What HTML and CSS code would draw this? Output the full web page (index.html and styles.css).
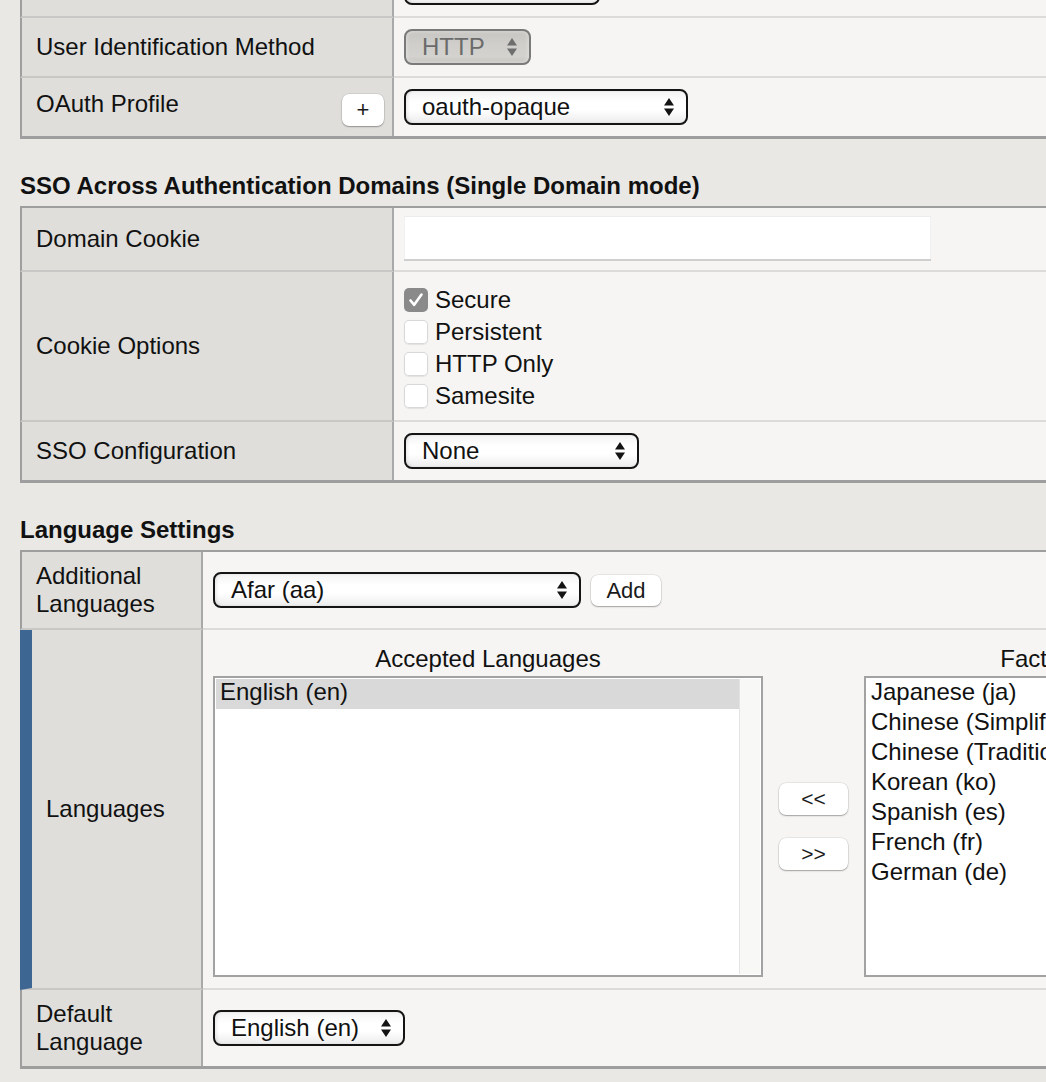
FILE: index.html
```html
<!DOCTYPE html>
<html>
<head>
<meta charset="utf-8">
<title>Access Profile Settings</title>
<link rel="stylesheet" href="styles.css">
</head>
<body>
<div class="page">

  <div class="table table-scrolled">
    <div class="row">
      <div class="label"></div>
      <div class="value">
        <div class="select w196"><span class="select-text"></span>
          <svg class="arrows" viewBox="0 0 12 20" width="12" height="20"><path d="M6 1 L11 8.5 L1 8.5 Z M1 11.5 L11 11.5 L6 19 Z"/></svg>
        </div>
      </div>
    </div>
    <div class="row">
      <div class="label">User Identification Method</div>
      <div class="value">
        <div class="select select-disabled w127"><span class="select-text">HTTP</span>
          <svg class="arrows" viewBox="0 0 12 20" width="12" height="20"><path d="M6 1 L11 8.5 L1 8.5 Z M1 11.5 L11 11.5 L6 19 Z"/></svg>
        </div>
      </div>
    </div>
    <div class="row">
      <div class="label"><span class="label-raised">OAuth Profile</span><button class="btn btn-plus" type="button">+</button></div>
      <div class="value">
        <div class="select w284"><span class="select-text">oauth-opaque</span>
          <svg class="arrows" viewBox="0 0 12 20" width="12" height="20"><path d="M6 1 L11 8.5 L1 8.5 Z M1 11.5 L11 11.5 L6 19 Z"/></svg>
        </div>
      </div>
    </div>
  </div>

  <h2 class="section-title">SSO Across Authentication Domains (Single Domain mode)</h2>
  <div class="table">
    <div class="row">
      <div class="label">Domain Cookie</div>
      <div class="value value-input"><input class="text-input" type="text"></div>
    </div>
    <div class="row">
      <div class="label">Cookie Options</div>
      <div class="value value-checks">
        <div class="checks">
          <label class="check"><span class="box box-checked"><svg viewBox="0 0 24 24" width="24" height="24"><path d="M6.5 12.5 L10.2 16.8 L17.5 6.5" fill="none" stroke="#fff" stroke-width="2.6" stroke-linecap="round" stroke-linejoin="round"/></svg></span>Secure</label>
          <label class="check"><span class="box"></span>Persistent</label>
          <label class="check"><span class="box"></span>HTTP Only</label>
          <label class="check"><span class="box"></span>Samesite</label>
        </div>
      </div>
    </div>
    <div class="row">
      <div class="label">SSO Configuration</div>
      <div class="value">
        <div class="select w235"><span class="select-text">None</span>
          <svg class="arrows" viewBox="0 0 12 20" width="12" height="20"><path d="M6 1 L11 8.5 L1 8.5 Z M1 11.5 L11 11.5 L6 19 Z"/></svg>
        </div>
      </div>
    </div>
  </div>

  <h2 class="section-title">Language Settings</h2>
  <div class="table table-lang">
    <div class="row">
      <div class="label">Additional Languages</div>
      <div class="value value-tall">
        <div class="select w368"><span class="select-text">Afar (aa)</span>
          <svg class="arrows" viewBox="0 0 12 20" width="12" height="20"><path d="M6 1 L11 8.5 L1 8.5 Z M1 11.5 L11 11.5 L6 19 Z"/></svg>
        </div>
        <button class="btn btn-add" type="button">Add</button>
      </div>
    </div>
    <div class="row">
      <div class="label label-active">Languages</div>
      <div class="value value-langs">
        <div class="lang-col">
          <div class="lang-head">Accepted Languages</div>
          <div class="listbox">
            <div class="list-items">
              <div class="item item-selected">English (en)</div>
            </div>
            <div class="scroll-track"></div>
          </div>
        </div>
        <div class="move-buttons">
          <button class="btn btn-move" type="button">&lt;&lt;</button>
          <button class="btn btn-move" type="button">&gt;&gt;</button>
        </div>
        <div class="lang-col">
          <div class="lang-head">Factory Builtin Languages</div>
          <div class="listbox">
            <div class="list-items">
              <div class="item">Japanese (ja)</div>
              <div class="item">Chinese (Simplified) (zh-cn)</div>
              <div class="item">Chinese (Traditional) (zh-tw)</div>
              <div class="item">Korean (ko)</div>
              <div class="item">Spanish (es)</div>
              <div class="item">French (fr)</div>
              <div class="item">German (de)</div>
            </div>
            <div class="scroll-track"></div>
          </div>
        </div>
      </div>
    </div>
    <div class="row">
      <div class="label">Default Language</div>
      <div class="value value-tall">
        <div class="select w192"><span class="select-text">English (en)</span>
          <svg class="arrows" viewBox="0 0 12 20" width="12" height="20"><path d="M6 1 L11 8.5 L1 8.5 Z M1 11.5 L11 11.5 L6 19 Z"/></svg>
        </div>
      </div>
    </div>
  </div>

</div>
</body>
</html>
```
FILE: styles.css
```css
* { box-sizing: border-box; }

html, body {
  margin: 0;
  padding: 0;
}

body {
  width: 1046px;
  height: 1082px;
  overflow: hidden;
  background: #e9e8e5;
  color: #111;
  font-family: "Liberation Sans", Arial, Helvetica, sans-serif;
  font-size: 24px;
  line-height: 28px;
}

.page {
  padding-left: 20px;
}

.section-title {
  margin: 33px 0 6px;
  font-size: 24px;
  line-height: 28px;
  font-weight: bold;
}

.table {
  width: 1700px;
  border-top: 2px solid #9e9e9e;
  border-bottom: 3px solid #9e9e9e;
}

.table-scrolled {
  margin-top: -44px;
}

.row {
  display: flex;
}

.label {
  flex: none;
  width: 374px;
  display: flex;
  align-items: center;
  justify-content: space-between;
  padding: 0 8px 0 14px;
  background: #dfdedb;
  border-left: 2px solid #9e9e9e;
  border-right: 2px solid #a9a9a9;
  border-bottom: 2px solid #c9c8c6;
}

.label-raised {
  margin-bottom: 6px;
}

.table-lang .label {
  width: 183px;
}

.label-active {
  border-left: 12px solid #3e6692;
}

.value {
  flex: 1;
  display: flex;
  align-items: center;
  padding: 11px 10px;
  background: #f6f5f3;
  border-bottom: 2px solid #dcdbd9;
}

.row:last-child .label,
.row:last-child .value {
  border-bottom: 0;
}

.value-input {
  padding: 8px 10px 11px;
}

.value-checks {
  padding: 12px 10px 8px;
}

.value-tall {
  padding: 20px 10px;
}

.value-langs {
  align-items: stretch;
  padding: 15px 10px 11px;
}

/* selects */
.select {
  height: 36px;
  display: flex;
  align-items: center;
  justify-content: space-between;
  padding: 0 11px 0 16px;
  border: 2px solid #141414;
  border-radius: 8px;
  background: linear-gradient(to bottom, #f3f3f3 0%, #ffffff 35%, #ffffff 60%, #ececec 100%);
  box-shadow: inset 2px 0 3px rgba(0, 0, 0, 0.08);
  color: #111;
  white-space: nowrap;
}

.select .arrows {
  flex: none;
  fill: #141414;
}

.select-disabled {
  border-color: #7a7a7a;
  background: linear-gradient(to bottom, #c6c5c1 0%, #cfcecb 40%, #d3d2ce 80%, #c4c3bf 100%);
  box-shadow: inset 0 0 4px rgba(255, 255, 255, 0.5);
  color: #6b6b6b;
}

.select-disabled .arrows {
  fill: #6e6e6e;
}

.w127 { width: 127px; }
.w192 { width: 192px; }
.w196 { width: 196px; }
.w235 { width: 235px; }
.w284 { width: 284px; }
.w368 { width: 368px; }

/* buttons */
.btn {
  flex: none;
  height: 32px;
  padding: 0;
  border: 0;
  border-radius: 7px;
  background: #fff;
  box-shadow: 0 1px 1.5px rgba(0, 0, 0, 0.3), 0 0 0 0.5px rgba(0, 0, 0, 0.12);
  color: #1a1a1a;
  font-family: "Liberation Sans", Arial, Helvetica, sans-serif;
  font-size: 22px;
  line-height: 32px;
}

.btn-plus {
  width: 42px;
  margin-top: 6px;
}

.btn-add {
  width: 70px;
  height: 31px;
  line-height: 31px;
  margin-left: 10px;
}

.btn-move {
  width: 69px;
  font-size: 21px;
}

/* text input */
.text-input {
  width: 527px;
  height: 43px;
  border: 0;
  background: #fff;
  box-shadow: inset 0 1px 0 #ececec, inset 1px 0 0 #f1f1f1, inset -1px 0 0 #f1f1f1, 0 2px 0 #cfcfcf;
  font-family: inherit;
  font-size: 24px;
}

/* checkboxes */
.checks {
  display: flex;
  flex-direction: column;
}

.check {
  height: 32px;
  display: flex;
  align-items: center;
  gap: 7px;
}

.box {
  width: 24px;
  height: 24px;
  border-radius: 5px;
  background: #fff;
  box-shadow: inset 0 0 0 1px #d8d8d8, 0 0.5px 1px rgba(0, 0, 0, 0.08);
}

.box svg {
  display: block;
}

.box-checked {
  background: #8a8a8a;
  box-shadow: none;
}

/* language lists */
.lang-col {
  flex: none;
  width: 550px;
  display: flex;
  flex-direction: column;
}

.lang-head {
  height: 28px;
  margin-bottom: 3px;
  text-align: center;
  white-space: nowrap;
}

.listbox {
  height: 301px;
  display: flex;
  padding: 1px;
  border: 2px solid #a2a2a2;
  background: #fff;
}

.list-items {
  flex: 1;
  overflow: hidden;
}

.item {
  height: 30px;
  padding-left: 4px;
  line-height: 26px;
  white-space: nowrap;
}

.item-selected {
  background: #d9d9d9;
}

.scroll-track {
  flex: none;
  width: 21px;
  background: #f8f8f7;
  border-left: 1px solid #e4e4e4;
}

.move-buttons {
  flex: none;
  width: 69px;
  margin: 0 16px;
  padding-top: 30px;
  display: flex;
  flex-direction: column;
  justify-content: center;
  gap: 23px;
}
```
